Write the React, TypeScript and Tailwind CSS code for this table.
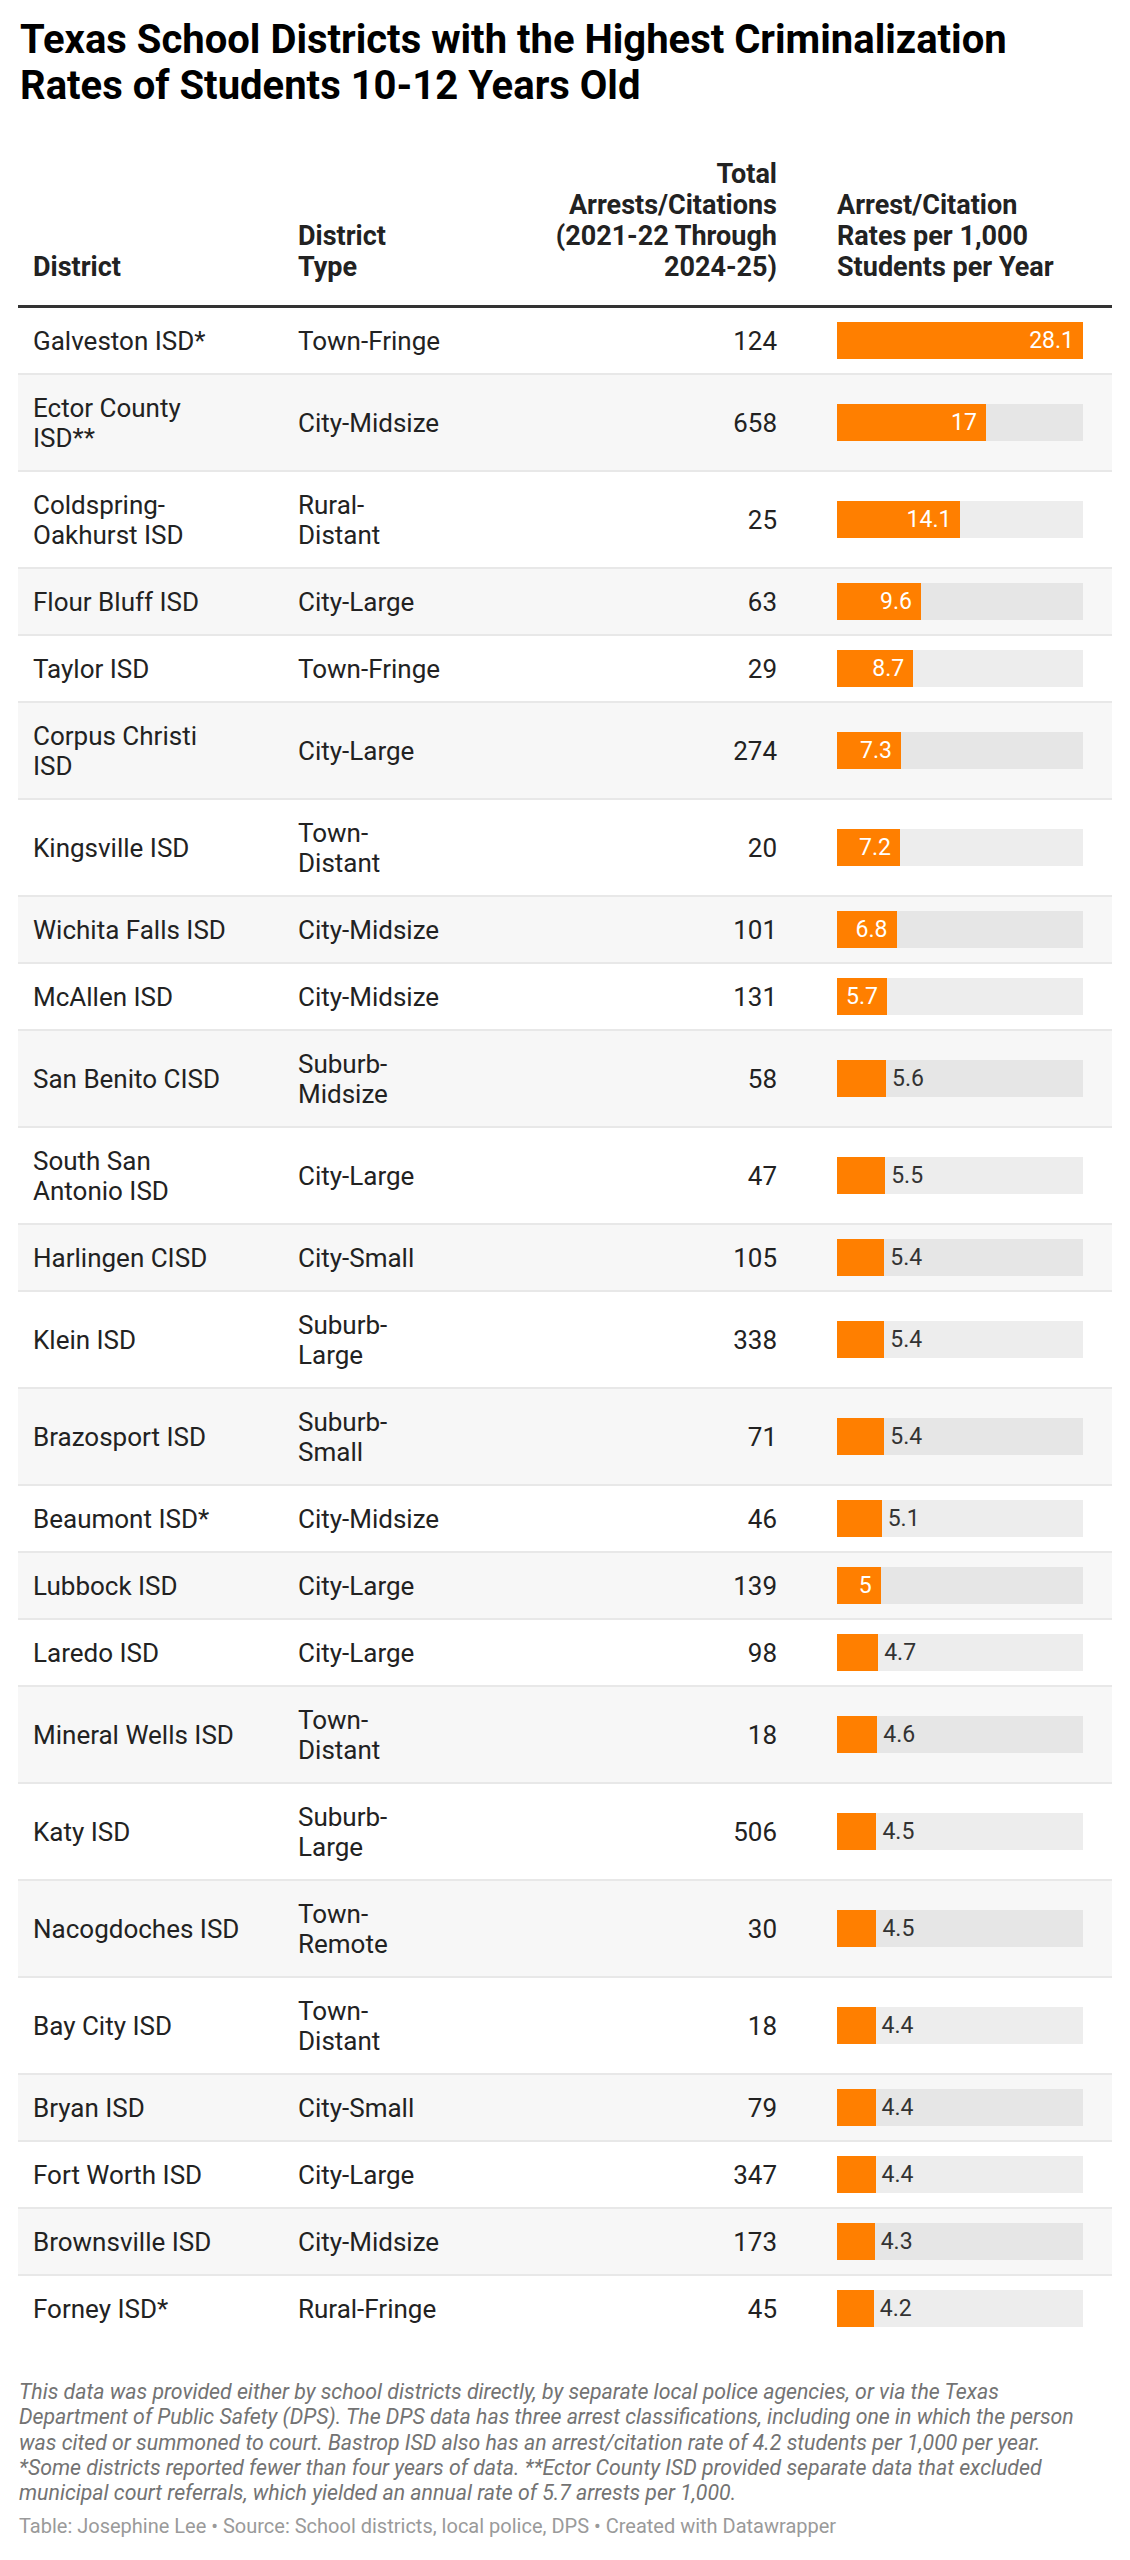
import React from 'react';

type Row = {
  name: string;
  type: string;
  total: number;
  rate: number;
  inside: boolean;
};

const MAX = 28.1;

const rows: Row[] = [
  { name: 'Galveston ISD*', type: 'Town-Fringe', total: 124, rate: 28.1, inside: true },
  { name: 'Ector County\nISD**', type: 'City-Midsize', total: 658, rate: 17, inside: true },
  { name: 'Coldspring-\nOakhurst ISD', type: 'Rural-\nDistant', total: 25, rate: 14.1, inside: true },
  { name: 'Flour Bluff ISD', type: 'City-Large', total: 63, rate: 9.6, inside: true },
  { name: 'Taylor ISD', type: 'Town-Fringe', total: 29, rate: 8.7, inside: true },
  { name: 'Corpus Christi\nISD', type: 'City-Large', total: 274, rate: 7.3, inside: true },
  { name: 'Kingsville ISD', type: 'Town-\nDistant', total: 20, rate: 7.2, inside: true },
  { name: 'Wichita Falls ISD', type: 'City-Midsize', total: 101, rate: 6.8, inside: true },
  { name: 'McAllen ISD', type: 'City-Midsize', total: 131, rate: 5.7, inside: true },
  { name: 'San Benito CISD', type: 'Suburb-\nMidsize', total: 58, rate: 5.6, inside: false },
  { name: 'South San\nAntonio ISD', type: 'City-Large', total: 47, rate: 5.5, inside: false },
  { name: 'Harlingen CISD', type: 'City-Small', total: 105, rate: 5.4, inside: false },
  { name: 'Klein ISD', type: 'Suburb-\nLarge', total: 338, rate: 5.4, inside: false },
  { name: 'Brazosport ISD', type: 'Suburb-\nSmall', total: 71, rate: 5.4, inside: false },
  { name: 'Beaumont ISD*', type: 'City-Midsize', total: 46, rate: 5.1, inside: false },
  { name: 'Lubbock ISD', type: 'City-Large', total: 139, rate: 5, inside: true },
  { name: 'Laredo ISD', type: 'City-Large', total: 98, rate: 4.7, inside: false },
  { name: 'Mineral Wells ISD', type: 'Town-\nDistant', total: 18, rate: 4.6, inside: false },
  { name: 'Katy ISD', type: 'Suburb-\nLarge', total: 506, rate: 4.5, inside: false },
  { name: 'Nacogdoches ISD', type: 'Town-\nRemote', total: 30, rate: 4.5, inside: false },
  { name: 'Bay City ISD', type: 'Town-\nDistant', total: 18, rate: 4.4, inside: false },
  { name: 'Bryan ISD', type: 'City-Small', total: 79, rate: 4.4, inside: false },
  { name: 'Fort Worth ISD', type: 'City-Large', total: 347, rate: 4.4, inside: false },
  { name: 'Brownsville ISD', type: 'City-Midsize', total: 173, rate: 4.3, inside: false },
  { name: 'Forney ISD*', type: 'Rural-Fringe', total: 45, rate: 4.2, inside: false },
];

const grid = 'grid grid-cols-[265px_200px_279px_306px] pl-[15px] pr-[29px]';

const Bar: React.FC<{ row: Row; odd: boolean }> = ({ row, odd }) => {
  const pct = (row.rate / MAX) * 100;
  return (
    <div className={`flex h-[37px] items-center ${odd ? 'bg-[#e6e6e6]' : 'bg-[#ededed]'}`}>
      <div
        className="flex h-full items-center justify-end bg-[#ff7f00] pr-[9px] text-white"
        style={{ width: `${pct}%` }}
      >
        {row.inside && <span>{row.rate}</span>}
      </div>
      {!row.inside && <span className="ml-[6px] text-[#333]">{row.rate}</span>}
    </div>
  );
};

export default function App() {
  return (
    <div className="w-[1130px] bg-white font-['Roboto',sans-serif] text-[#222]">
      <h1 className="px-[20px] pt-[17px] text-[40px] font-bold leading-[46px] text-black">
        Texas School Districts with the Highest Criminalization
        <br />
        Rates of Students 10-12 Years Old
      </h1>

      <div className="mx-[18px] mt-[50px]">
        <div className={`${grid} items-end border-b-[3px] border-[#333] pb-[22px] text-[27px] font-bold leading-[31px]`}>
          <div>District</div>
          <div>
            District
            <br />
            Type
          </div>
          <div className="text-right">
            Total
            <br />
            Arrests/Citations
            <br />
            (2021-22 Through
            <br />
            2024-25)
          </div>
          <div className="pl-[60px]">
            Arrest/Citation
            <br />
            Rates per 1,000
            <br />
            Students per Year
          </div>
        </div>

        {rows.map((row, i) => {
          const odd = i % 2 === 1;
          const last = i === rows.length - 1;
          return (
            <div
              key={row.name}
              className={`${grid} items-center text-[26px] leading-[30px] text-[#222] ${
                odd ? 'bg-[#f7f7f7]' : 'bg-white'
              } ${last ? '' : 'border-b-2 border-[#e8e8e8]'}`}
            >
              <div className="whitespace-pre-line py-[17.5px]">{row.name}</div>
              <div className="whitespace-pre-line py-[17.5px]">{row.type}</div>
              <div className="py-[17.5px] text-right tabular-nums">{row.total}</div>
              <div className="pl-[60px] text-[23px]">
                <Bar row={row} odd={odd} />
              </div>
            </div>
          );
        })}
      </div>

      <div className="px-[19px] pt-[38px]">
        <p className="whitespace-nowrap text-[21.3px] italic leading-[25.3px] text-[#737373]">
          This data was provided either by school districts directly, by separate local police agencies, or via the Texas
          <br />
          Department of Public Safety (DPS). The DPS data has three arrest classifications, including one in which the person
          <br />
          was cited or summoned to court. Bastrop ISD also has an arrest/citation rate of 4.2 students per 1,000 per year.
          <br />
          *Some districts reported fewer than four years of data. **Ector County ISD provided separate data that excluded
          <br />
          municipal court referrals, which yielded an annual rate of 5.7 arrests per 1,000.
        </p>
        <p className="mt-[8px] whitespace-nowrap text-[20px] leading-[26px] text-[#9a9a9a]">
          Table: Josephine Lee • Source: School districts, local police, DPS • Created with Datawrapper
        </p>
      </div>
    </div>
  );
}
